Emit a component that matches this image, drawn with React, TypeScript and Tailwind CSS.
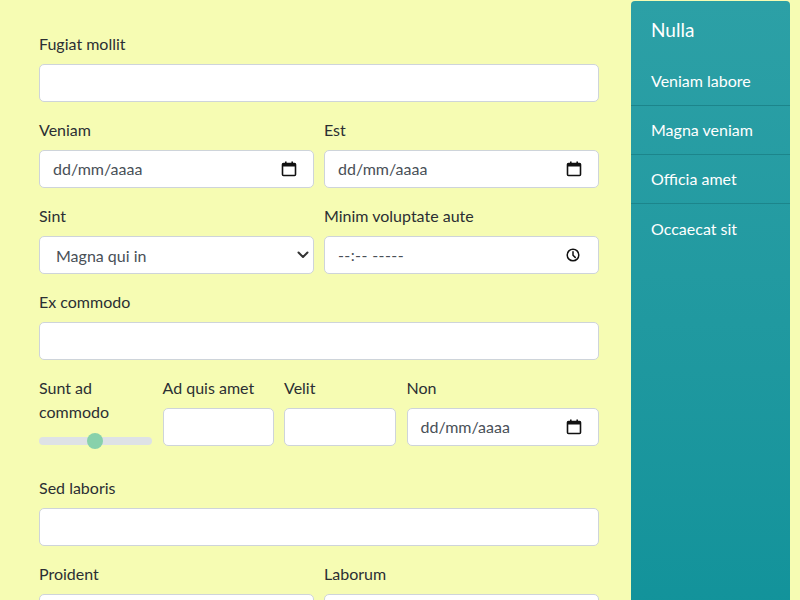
import React from 'react';

const font = { fontFamily: 'Lato, "Open Sans", "Liberation Sans", sans-serif' };

const CalendarIcon = () => (
  <svg width="16" height="16" viewBox="0 0 16 16" fill="none">
    <rect x="1.5" y="2.5" width="13" height="12" rx="1" stroke="#111" strokeWidth="1.6" />
    <rect x="1.5" y="2.5" width="13" height="3" fill="#111" />
    <rect x="4" y="0.5" width="1.6" height="3" fill="#111" />
    <rect x="10.4" y="0.5" width="1.6" height="3" fill="#111" />
  </svg>
);

const ClockIcon = () => (
  <svg width="14" height="14" viewBox="0 0 14 14" fill="none">
    <circle cx="7" cy="7" r="5.8" stroke="#111" strokeWidth="1.5" />
    <path d="M7 3.8V7.2L9.2 9.4" stroke="#111" strokeWidth="1.5" strokeLinecap="round" />
  </svg>
);

const Chevron = () => (
  <svg width="12" height="8" viewBox="0 0 12 8" fill="none">
    <path d="M1.5 1.5L6 6L10.5 1.5" stroke="#333" strokeWidth="2" strokeLinecap="round" strokeLinejoin="round" />
  </svg>
);

const Label: React.FC<{ children: React.ReactNode }> = ({ children }) => (
  <label className="block mb-2 text-[16px] leading-6 text-[#2b2f33]">{children}</label>
);

const TextBox = () => (
  <div className="h-[38px] bg-white border border-[#ced4da] rounded-[5px]" />
);

const DateBox = () => (
  <div className="h-[38px] bg-white border border-[#ced4da] rounded-[5px] flex items-center justify-between pl-[13px] pr-[16px] text-[16px] text-[#495057]">
    <span>dd/mm/aaaa</span>
    <CalendarIcon />
  </div>
);

const TimeBox = () => (
  <div className="h-[38px] bg-white border border-[#ced4da] rounded-[5px] flex items-center justify-between pl-[13px] pr-[18px] text-[16px] text-[#495057]">
    <span className="tracking-wide">--:-- -----</span>
    <ClockIcon />
  </div>
);

const SelectBox = () => (
  <div className="h-[38px] bg-white border border-[#ced4da] rounded-[5px] flex items-center justify-between pl-[16px] pr-[4px] text-[16px] text-[#495057]">
    <span className="pt-px">Magna qui in</span>
    <Chevron />
  </div>
);

const Field: React.FC<{ label: string; children: React.ReactNode }> = ({ label, children }) => (
  <div className="mb-4">
    <Label>{label}</Label>
    {children}
  </div>
);

const menu = ['Veniam labore', 'Magna veniam', 'Officia amet', 'Occaecat sit'];

export default function App() {
  return (
    <div className="w-[800px] h-[600px] overflow-hidden bg-[#f6fcb3] flex" style={font}>
      {/* Form */}
      <div className="w-[599px] pl-[39px] pt-8 shrink-0">
        <Field label="Fugiat mollit"><TextBox /></Field>

        <div className="grid grid-cols-2 gap-x-[10px]">
          <Field label="Veniam"><DateBox /></Field>
          <Field label="Est"><DateBox /></Field>
        </div>

        <div className="grid grid-cols-2 gap-x-[10px]">
          <Field label="Sint"><SelectBox /></Field>
          <Field label="Minim voluptate aute"><TimeBox /></Field>
        </div>

        <Field label="Ex commodo"><TextBox /></Field>

        <div className="grid grid-cols-[113px_111px_112px_1fr] gap-x-[10.5px] pb-[10px]">
          <div className="mb-4">
            <Label>Sunt ad commodo</Label>
            <div className="relative h-[18px] flex items-center">
              <div className="w-full h-[8px] rounded-full bg-[#dee2e6]" />
              <div className="absolute left-[48px] top-[1px] w-4 h-4 rounded-full bg-[#88d1ab]" />
            </div>
          </div>
          <Field label="Ad quis amet"><TextBox /></Field>
          <Field label="Velit"><TextBox /></Field>
          <Field label="Non"><DateBox /></Field>
        </div>

        <Field label="Sed laboris"><TextBox /></Field>

        <div className="grid grid-cols-2 gap-x-[10px]">
          <Field label="Proident"><TextBox /></Field>
          <Field label="Laborum"><TextBox /></Field>
        </div>
      </div>

      {/* Sidebar */}
      <div className="ml-[32px] mt-px w-[159px] h-[640px] rounded-t-[4px] bg-gradient-to-b from-[#2ca0a6] to-[#10929a] text-white">
        <div className="px-5 pt-[17px] pb-[15px] text-[19px] leading-6">Nulla</div>
        {menu.map((item, i) => (
          <div
            key={item}
            className={`px-5 h-[49px] flex items-center text-[16px] ${i < menu.length - 1 ? 'border-b border-[#1c858b]' : ''}`}
          >
            {item}
          </div>
        ))}
      </div>
    </div>
  );
}
